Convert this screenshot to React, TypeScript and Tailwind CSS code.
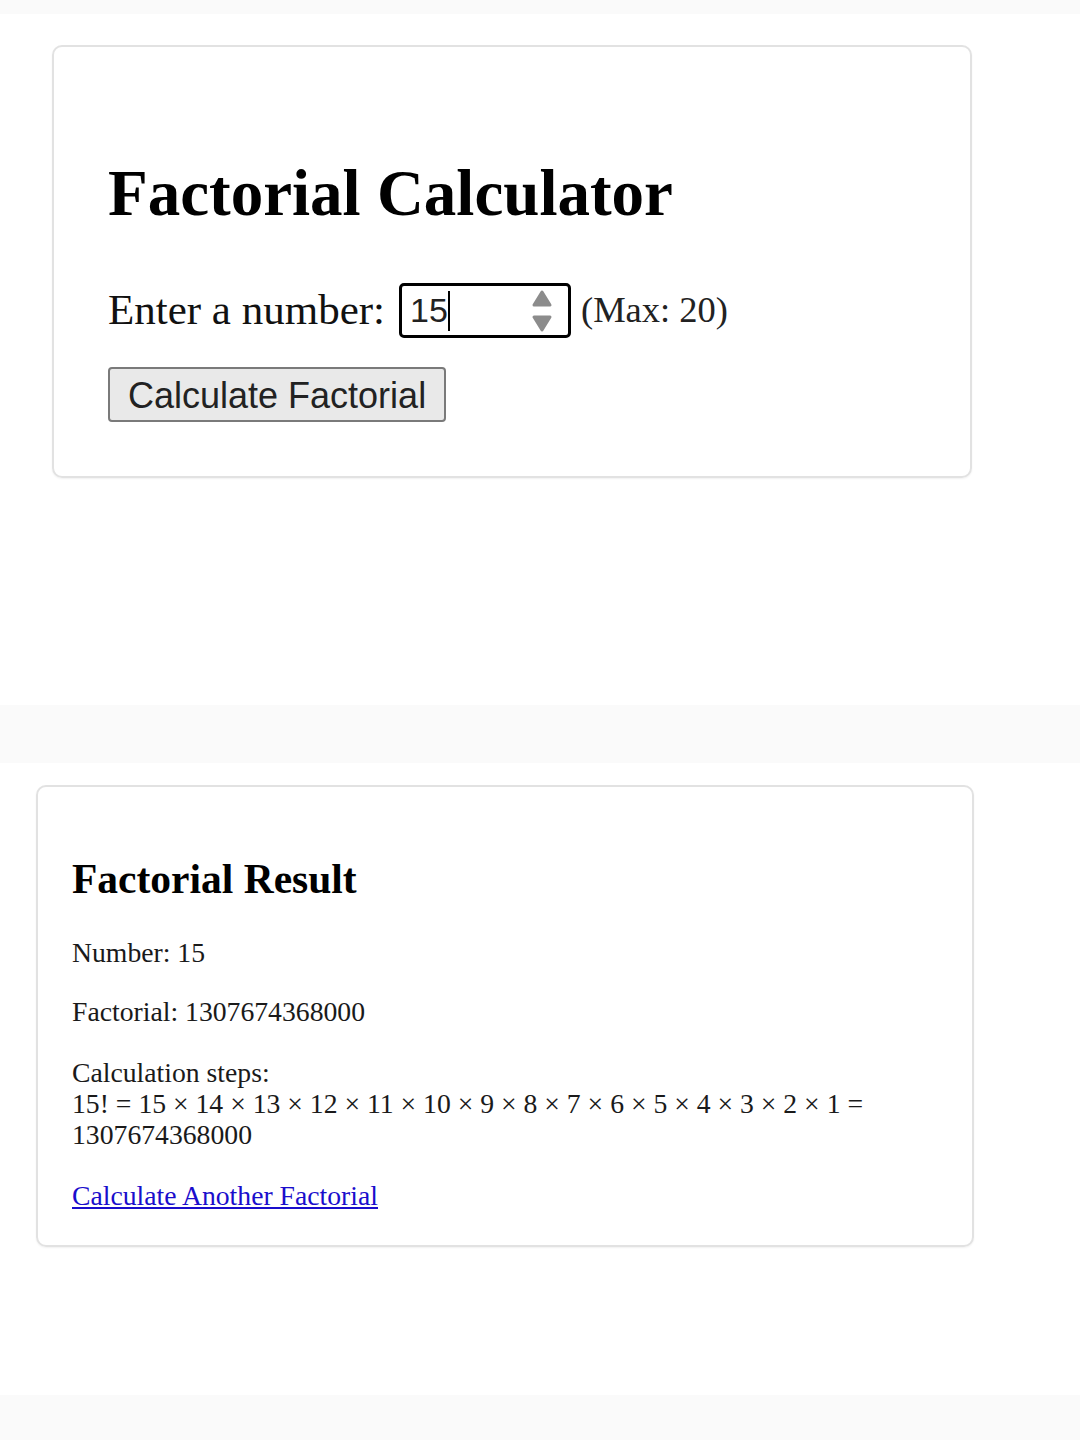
import React from 'react';

const serif = { fontFamily: '"Liberation Serif", "Times New Roman", serif' };
const sans = { fontFamily: '"Liberation Sans", Arial, sans-serif' };

function Spinner() {
  return (
    <svg width="24" height="46" viewBox="0 0 24 46" className="shrink-0">
      <path d="M12 4 L20 17 L4 17 Z" fill="#8c8c8c" stroke="#8c8c8c" strokeWidth="3" strokeLinejoin="round" />
      <path d="M12 42 L20 29 L4 29 Z" fill="#8c8c8c" stroke="#8c8c8c" strokeWidth="3" strokeLinejoin="round" />
    </svg>
  );
}

export default function App() {
  const n = 15;
  const result = '1307674368000';
  const steps = Array.from({ length: n }, (_, i) => n - i).join(' × ');

  return (
    <div className="min-h-[1440px] bg-white flex flex-col">
      <div className="h-[14px] bg-[#fafafa]" />

      {/* Calculator form */}
      <div className="h-[691px] pt-[31px] pl-[52px]">
        <div className="w-[920px] border-2 border-[#e2e2e2] rounded-[10px] px-[54px] pt-[109px] pb-[54px] shadow-[0_1px_2px_rgba(0,0,0,0.06)]">
          <h1 className="text-[65px] leading-[74px] font-bold text-black" style={serif}>
            Factorial Calculator
          </h1>
          <div className="mt-[53px] flex items-center h-[55px]">
            <span className="text-[43px] text-[#111]" style={serif}>Enter a number:</span>
            <div className="ml-[14px] w-[172px] h-[55px] border-[3px] border-black rounded-[5px] flex items-center pl-[8px] pr-[14px]">
              <span className="text-[34px] text-[#222]" style={sans}>{n}</span>
              <span className="w-[2px] h-[40px] bg-black" />
              <div className="flex-1" />
              <Spinner />
            </div>
            <span className="ml-[10px] text-[36.5px] text-[#222]" style={serif}>(Max: 20)</span>
          </div>
          <button
            className="mt-[29px] h-[55px] px-[18px] bg-[#e9e9e9] border-2 border-[#7a7a7a] rounded-[4px] text-[36px] text-[#222]"
            style={sans}
          >
            Calculate Factorial
          </button>
        </div>
      </div>

      <div className="h-[58px] bg-[#fafafa]" />

      {/* Result */}
      <div className="h-[632px] pt-[22px] pl-[36px]">
        <div className="w-[938px] border-2 border-[#e2e2e2] rounded-[10px] px-[34px] pt-[68px] pb-[34px] shadow-[0_1px_2px_rgba(0,0,0,0.06)] text-[#1a1a1a]" style={serif}>
          <h2 className="text-[41.5px] leading-[48px] font-bold text-black">Factorial Result</h2>
          <p className="mt-[34px] text-[27.7px] leading-[31px]">Number: {n}</p>
          <p className="mt-[28px] text-[27.7px] leading-[31px]">Factorial: {result}</p>
          <p className="mt-[30px] text-[27.7px] leading-[31px]">
            Calculation steps:
            <br />
            {n}! = {steps} = {result}
          </p>
          <a href="#" className="block mt-[30px] text-[27.7px] leading-[31px] text-[#1a0dcc] underline w-fit">
            Calculate Another Factorial
          </a>
        </div>
      </div>

      <div className="flex-1 bg-[#fafafa]" />
    </div>
  );
}
